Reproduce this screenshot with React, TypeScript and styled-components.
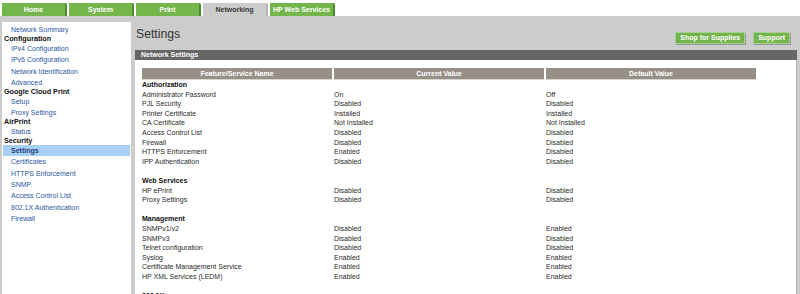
import styled, { createGlobalStyle } from 'styled-components';

const GlobalStyle = createGlobalStyle`
  html, body {
    margin: 0;
    padding: 0;
    background: #ffffff;
    font-family: 'Liberation Sans', Arial, sans-serif;
  }
`;

type Row = { name: string; current?: string; def?: string; heading?: boolean; blank?: boolean };

const tabs = ['Home', 'System', 'Print', 'Networking', 'HP Web Services'];

const nav: { label: string; heading?: boolean; active?: boolean }[] = [
  { label: 'Network Summary' },
  { label: 'Configuration', heading: true },
  { label: 'IPv4 Configuration' },
  { label: 'IPv6 Configuration' },
  { label: 'Network Identification' },
  { label: 'Advanced' },
  { label: 'Google Cloud Print', heading: true },
  { label: 'Setup' },
  { label: 'Proxy Settings' },
  { label: 'AirPrint', heading: true },
  { label: 'Status' },
  { label: 'Security', heading: true },
  { label: 'Settings', active: true },
  { label: 'Certificates' },
  { label: 'HTTPS Enforcement' },
  { label: 'SNMP' },
  { label: 'Access Control List' },
  { label: '802.1X Authentication' },
  { label: 'Firewall' },
];

const rows: Row[] = [
  { name: 'Authorization', heading: true },
  { name: 'Administrator Password', current: 'On', def: 'Off' },
  { name: 'PJL Security', current: 'Disabled', def: 'Disabled' },
  { name: 'Printer Certificate', current: 'Installed', def: 'Installed' },
  { name: 'CA Certificate', current: 'Not Installed', def: 'Not Installed' },
  { name: 'Access Control List', current: 'Disabled', def: 'Disabled' },
  { name: 'Firewall', current: 'Disabled', def: 'Disabled' },
  { name: 'HTTPS Enforcement', current: 'Enabled', def: 'Disabled' },
  { name: 'IPP Authentication', current: 'Disabled', def: 'Disabled' },
  { name: '', blank: true },
  { name: 'Web Services', heading: true },
  { name: 'HP ePrint', current: 'Disabled', def: 'Disabled' },
  { name: 'Proxy Settings', current: 'Disabled', def: 'Disabled' },
  { name: '', blank: true },
  { name: 'Management', heading: true },
  { name: 'SNMPv1/v2', current: 'Disabled', def: 'Enabled' },
  { name: 'SNMPv3', current: 'Disabled', def: 'Disabled' },
  { name: 'Telnet configuration', current: 'Disabled', def: 'Disabled' },
  { name: 'Syslog', current: 'Enabled', def: 'Enabled' },
  { name: 'Certificate Management Service', current: 'Enabled', def: 'Enabled' },
  { name: 'HP XML Services (LEDM)', current: 'Enabled', def: 'Enabled' },
  { name: '', blank: true },
  { name: '802.1X', heading: true },
];

const App: React.FC = () => {
  return (
    <Page>
      <GlobalStyle />
      <TabBar>
        {tabs.map((t) => (
          <Tab key={t} $active={t === 'Networking'}>
            {t}
          </Tab>
        ))}
      </TabBar>
      <Body>
        <Sidebar>
          {nav.map((n) =>
            n.heading ? (
              <NavHeading key={n.label}>{n.label}</NavHeading>
            ) : (
              <NavLink key={n.label} $active={n.active}>
                {n.label}
              </NavLink>
            )
          )}
        </Sidebar>
        <Main>
          <TitleRow>
            <Title>Settings</Title>
            <Buttons>
              <GreenButton>Shop for Supplies</GreenButton>
              <GreenButton>Support</GreenButton>
            </Buttons>
          </TitleRow>
          <SectionBar>Network Settings</SectionBar>
          <Content>
            <Table>
              <thead>
                <tr>
                  <Th $w={190}>Feature/Service Name</Th>
                  <Th $w={210}>Current Value</Th>
                  <Th $w={210}>Default Value</Th>
                </tr>
              </thead>
              <tbody>
                {rows.map((r, i) => (
                  <tr key={i}>
                    <Td $heading={r.heading}>{r.blank ? '\u00a0' : r.name}</Td>
                    <Td>{r.current}</Td>
                    <Td>{r.def}</Td>
                  </tr>
                ))}
              </tbody>
            </Table>
          </Content>
        </Main>
      </Body>
    </Page>
  );
};

const Page = styled.div`
  width: 800px;
  height: 294px;
  overflow: hidden;
  display: flex;
  flex-direction: column;
  background: #ffffff;
`;

const TabBar = styled.div`
  display: flex;
  flex-shrink: 0;
  gap: 2px;
  height: 16px;
  padding: 3px 0 0 2px;
  box-sizing: border-box;
  align-items: stretch;
`;

const Tab = styled.div<{ $active?: boolean }>`
  width: 65px;
  box-sizing: border-box;
  background: ${(p) => (p.$active ? '#cccccc' : '#74b64c')};
  border-right: 2px solid ${(p) => (p.$active ? '#b5b5b5' : '#4e8a2f')};
  border-top-right-radius: 2px;
  color: ${(p) => (p.$active ? '#3a3a3a' : '#ffffff')};
  font-weight: bold;
  font-size: 7px;
  display: flex;
  align-items: center;
  justify-content: center;
  padding-bottom: 1px;
`;

const Body = styled.div`
  flex: 1;
  min-height: 0;
  display: flex;
  gap: 4px;
  background: #cccccc;
  padding: 6px 3px 0 2px;
`;

const Sidebar = styled.nav`
  width: 129px;
  flex-shrink: 0;
  background: #ffffff;
  padding-top: 2px;
  display: flex;
  flex-direction: column;
`;

const NavHeading = styled.div`
  flex-shrink: 0;
  height: 7.7px;
  line-height: 7.7px;
  padding-left: 2px;
  font-size: 7.2px;
  font-weight: bold;
  color: #111111;
`;

const NavLink = styled.a<{ $active?: boolean }>`
  display: block;
  flex-shrink: 0;
  height: 11.3px;
  line-height: 11.3px;
  padding-left: 8px;
  margin: 0 1px;
  font-size: 7px;
  color: #2b56a3;
  background: ${(p) => (p.$active ? '#a8d0f6' : 'transparent')};
  font-weight: ${(p) => (p.$active ? 'bold' : 'normal')};
  ${(p) => (p.$active ? 'color: #1d3f80;' : '')}
`;

const Main = styled.div`
  flex: 1;
  display: flex;
  flex-direction: column;
  min-width: 0;
`;

const TitleRow = styled.div`
  flex-shrink: 0;
  height: 28px;
  display: flex;
  align-items: flex-start;
  justify-content: space-between;
`;

const Title = styled.h1`
  margin: 5px 0 0 1px;
  font-size: 12.2px;
  line-height: 14px;
  font-weight: normal;
  color: #333333;
`;

const Buttons = styled.div`
  display: flex;
  gap: 8px;
  margin: 10px 7px 0 0;
`;

const GreenButton = styled.button`
  height: 12px;
  padding: 0 4px;
  border: 1px solid #a9cf94;
  background: #73b54c;
  color: #ffffff;
  font-family: 'Liberation Sans', Arial, sans-serif;
  font-weight: bold;
  font-size: 7px;
  line-height: 10px;
  box-shadow: 1px 1px 0 #9a9a9a;
`;

const SectionBar = styled.div`
  flex-shrink: 0;
  height: 10px;
  line-height: 10px;
  background: #666666;
  color: #ffffff;
  font-size: 7px;
  font-weight: bold;
  padding-left: 6px;
`;

const Content = styled.div`
  flex: 1;
  min-height: 0;
  background: #ffffff;
  padding: 8px 0 0 7px;
  border-right: 1px solid #b0b0b0;
`;

const Table = styled.table`
  border-collapse: separate;
  border-spacing: 2px 0;
  margin-left: -2px;
  font-size: 7px;
  color: #222222;
`;

const Th = styled.th<{ $w: number }>`
  width: ${(p) => p.$w}px;
  height: 11px;
  padding: 0;
  background: #979088;
  color: #ffffff;
  font-weight: bold;
  text-align: center;
  line-height: 11px;
  border-bottom: 1px solid #d8d4d0;
`;

const Td = styled.td<{ $heading?: boolean }>`
  height: 9.6px;
  line-height: 9.6px;
  padding: 0;
  white-space: nowrap;
  font-weight: ${(p) => (p.$heading ? 'bold' : 'normal')};
  color: ${(p) => (p.$heading ? '#111111' : '#2a2a2a')};
`;

export default App;
